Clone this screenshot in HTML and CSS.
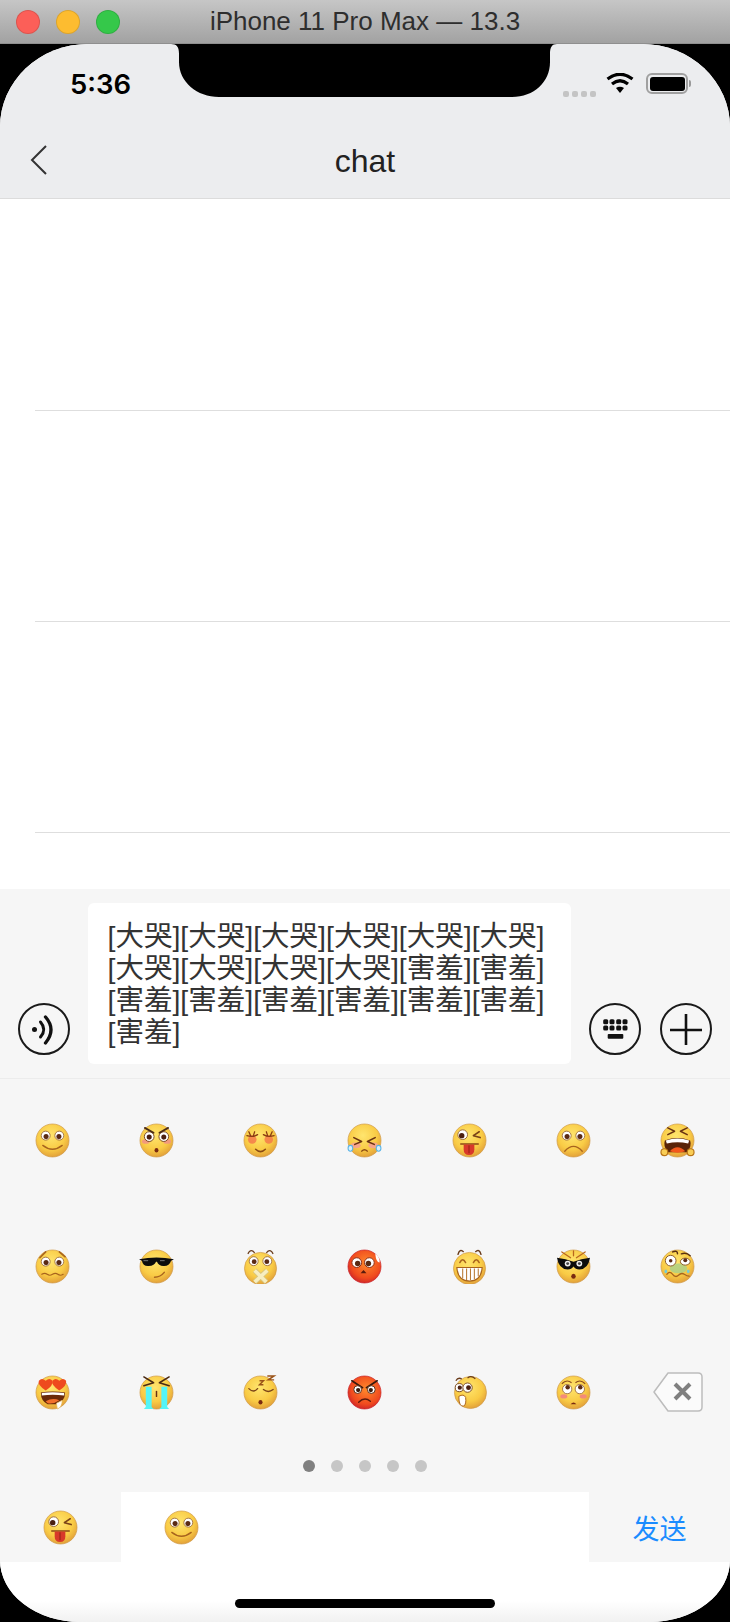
FILE: index.html
```html
<!DOCTYPE html>
<html lang="zh">

<head>
    <meta charset="UTF-8">
    <meta name="viewport" content="width=device-width, initial-scale=1.0">
    <title>chat</title>
    <link rel="stylesheet" href="styles.css">
</head>

<body>
    <!-- emoji sheet, every face below is used from here -->
    <svg class="defs" aria-hidden="true">
        <defs>
            <radialGradient id="skin" cx="45%" cy="35%" r="65%">
                <stop offset="0" stop-color="#ffe56e" />
                <stop offset="0.65" stop-color="#f9cb45" />
                <stop offset="1" stop-color="#e3a23a" />
            </radialGradient>
            <radialGradient id="hot" cx="55%" cy="40%" r="65%">
                <stop offset="0" stop-color="#ff8a2c" />
                <stop offset="0.7" stop-color="#f04a1e" />
                <stop offset="1" stop-color="#c8202a" />
            </radialGradient>
            <symbol id="base" viewBox="0 0 36 36">
                <circle cx="18" cy="18" r="17" fill="url(#skin)" stroke="#cf9a4a" stroke-width="0.7" />
            </symbol>
            <symbol id="eyes" viewBox="0 0 36 36">
                <circle cx="11" cy="13" r="4.6" fill="#fff" stroke="#9a6a3a" stroke-width="0.9" />
                <circle cx="25" cy="13" r="4.6" fill="#fff" stroke="#9a6a3a" stroke-width="0.9" />
                <circle cx="11.4" cy="14" r="2.6" fill="#5a2a14" />
                <circle cx="24.6" cy="14" r="2.6" fill="#5a2a14" />
            </symbol>
            <symbol id="e1" viewBox="0 0 36 36">
                <use href="#base" />
                <use href="#eyes" />
                <path d="M8 23Q18 31 28 23" fill="none" stroke="#a8641e" stroke-width="1.4" stroke-linecap="round" />
            </symbol>
            <symbol id="e2" viewBox="0 0 36 36">
                <use href="#base" />
                <ellipse cx="7" cy="19" rx="4" ry="2.4" fill="#f29a7c" />
                <ellipse cx="29" cy="19" rx="4" ry="2.4" fill="#f29a7c" />
                <circle cx="10.5" cy="14" r="5" fill="#fff" stroke="#7a4a22" />
                <circle cx="25.5" cy="14" r="5" fill="#fff" stroke="#7a4a22" />
                <circle cx="10.5" cy="14.5" r="2.6" fill="#4a1f10" />
                <circle cx="25.5" cy="14.5" r="2.6" fill="#4a1f10" />
                <path d="M6 5L15 10M30 5L21 10" stroke="#4a2a14" stroke-width="1.8" stroke-linecap="round" />
                <ellipse cx="18" cy="28" rx="2" ry="2.4" fill="#7a2a10" />
            </symbol>
            <symbol id="e3" viewBox="0 0 36 36">
                <use href="#base" />
                <circle cx="9.5" cy="17" r="4.4" fill="#f4754a" opacity="0.8" />
                <circle cx="26.5" cy="17" r="4.4" fill="#f4754a" opacity="0.8" />
                <path d="M4 13Q10 15 15 12M6 9L8 13.5M12 9L10.5 13.5M21 12Q26 15 32 13M24 9L25.5 13.5M30 9L28 13.5" fill="none" stroke="#8a3c12" stroke-width="1.3" stroke-linecap="round" />
                <path d="M13 27Q18 32 23 27" fill="none" stroke="#8a4a14" stroke-width="1.6" stroke-linecap="round" />
            </symbol>
            <symbol id="e4" viewBox="0 0 36 36">
                <use href="#base" />
                <ellipse cx="9" cy="23" rx="5" ry="3" fill="#f7a58a" />
                <ellipse cx="27" cy="23" rx="5" ry="3" fill="#f7a58a" />
                <path d="M7 15L15 19L8 22M29 15L21 19L28 22" fill="none" stroke="#6a3312" stroke-width="1.6" stroke-linecap="round" stroke-linejoin="round" />
                <path d="M15 29Q18 26 21 29" fill="none" stroke="#8a4a14" stroke-width="1.3" stroke-linecap="round" />
                <ellipse cx="3.5" cy="26" rx="2.4" ry="3" fill="#d8f1fb" stroke="#5ab4e6" stroke-width="1.1" />
                <ellipse cx="32.5" cy="26" rx="2.4" ry="3" fill="#d8f1fb" stroke="#5ab4e6" stroke-width="1.1" />
            </symbol>
            <symbol id="e5" viewBox="0 0 36 36">
                <use href="#base" />
                <circle cx="11" cy="12" r="5" fill="#fff" stroke="#9a6a3a" />
                <circle cx="10" cy="13" r="2.8" fill="#4a1f10" />
                <path d="M22 13L28 9M22 13L29 15" fill="none" stroke="#7a4318" stroke-width="1.6" stroke-linecap="round" />
                <path d="M9 21.5H27" stroke="#8a4a14" stroke-width="1.5" stroke-linecap="round" />
                <path d="M12 22H23V27Q23 33 17.500 33Q12 33 12 27Z" fill="#d8382a" />
                <path d="M17.500 23V31" stroke="#8f1f14" stroke-width="1" />
            </symbol>
            <symbol id="e6" viewBox="0 0 36 36">
                <use href="#base" />
                <use href="#eyes" />
                <path d="M9 29Q18 19 27 29" fill="none" stroke="#a8641e" stroke-width="1.4" stroke-linecap="round" />
            </symbol>
            <symbol id="e7" viewBox="0 0 36 36">
                <use href="#base" />
                <path d="M8 5L15 8.500L8 12M28 5L21 8.500L28 12" fill="none" stroke="#6a3312" stroke-width="1.5" stroke-linecap="round" stroke-linejoin="round" />
                <path d="M5 18Q18 13 31 18Q33 24 28 30H8Q3 24 5 18Z" fill="#5a2408" />
                <path d="M6 18Q18 14 30 18L29 21Q18 18.500 7 21Z" fill="#fff" />
                <path d="M10 29Q18 21 26 29Q18 32 10 29Z" fill="#f2581c" />
                <circle cx="4.500" cy="30" r="3.500" fill="#f9cd55" stroke="#b87416" stroke-width="1.2" />
                <circle cx="31.500" cy="30" r="3.500" fill="#f9cd55" stroke="#b87416" stroke-width="1.2" />
            </symbol>
            <symbol id="e8" viewBox="0 0 36 36">
                <use href="#base" />
                <path d="M5 9L11 3M25 3L31 8" stroke="#a8641e" stroke-width="1.6" stroke-linecap="round" />
                <use href="#eyes" />
                <path d="M7 26Q10 24 12.500 26T18 26T23.500 26T29 26" fill="none" stroke="#a8641e" stroke-width="1.2" stroke-linecap="round" />
            </symbol>
            <symbol id="e9" viewBox="0 0 36 36">
                <use href="#base" />
                <path d="M0 10.500Q18 7 36 10.500L33 12Q31 18 25 17.500Q20 17 18.500 13H17.500Q16 17 10 17.500Q4 18 3 12Z" fill="#0c0c0c" />
                <path d="M5 12L9 12M22 12L26 12" stroke="#777" stroke-width="1" stroke-linecap="round" />
                <path d="M16 29Q22 29 26 24" fill="none" stroke="#a8641e" stroke-width="1.5" stroke-linecap="round" />
            </symbol>
            <symbol id="e10" viewBox="0 0 36 36">
                <circle cx="18" cy="20" r="16.500" fill="url(#skin)" stroke="#cf9a4a" stroke-width="0.7" />
                <path d="M5 5Q8 -1 12 4M24 4Q28 -1 31 5" fill="none" stroke="#6a3c1c" stroke-width="1.300" />
                <circle cx="11" cy="12.500" r="4.600" fill="#fff" stroke="#9a6a3a" stroke-width="0.9" />
                <circle cx="25" cy="12.500" r="4.600" fill="#fff" stroke="#9a6a3a" stroke-width="0.9" />
                <circle cx="11.500" cy="13" r="2.500" fill="#5a2a14" />
                <circle cx="24.500" cy="13" r="2.500" fill="#5a2a14" />
                <path d="M12 22L24 34M25 22L12 34" stroke="#d8c47e" stroke-width="5.400" />
                <path d="M12 22L24 34M25 22L12 34" stroke="#f7eec0" stroke-width="3.600" />
            </symbol>
            <symbol id="e11" viewBox="0 0 36 36">
                <circle cx="18" cy="18" r="17" fill="url(#hot)" stroke="#c8202a" stroke-width="0.7" />
                <circle cx="10" cy="14" r="5" fill="#fff" stroke="#8a2a14" />
                <circle cx="23" cy="14" r="5" fill="#fff" stroke="#8a2a14" />
                <circle cx="11" cy="15" r="2.800" fill="#5a2a14" />
                <circle cx="22" cy="15" r="2.800" fill="#5a2a14" />
                <path d="M14 25L17 21.500L20 25Z" fill="#5a1a0c" />
                <path d="M29 5Q34 8 33.500 14Q30 14 29 5Z" fill="#fff" />
            </symbol>
            <symbol id="e12" viewBox="0 0 36 36">
                <circle cx="18" cy="20" r="16.500" fill="url(#skin)" stroke="#cf9a4a" stroke-width="0.7" />
                <path d="M6 6Q8 -1 12 3M24 3Q28 -1 30 6" fill="none" stroke="#6a3c1c" stroke-width="1.500" />
                <path d="M8 14Q11 8 14 14M22 14Q25 8 28 14" fill="none" stroke="#a8641e" stroke-width="1.500" stroke-linecap="round" />
                <path d="M5 19H31Q30 33 18 33Q6 33 5 19Z" fill="#fff" stroke="#a8641e" stroke-width="1.200" />
                <path d="M11 20V30M15 20V32M19 20V32M23 20V31M27 20V28" stroke="#b97b36" stroke-width="1.100" />
            </symbol>
            <symbol id="e13" viewBox="0 0 36 36">
                <use href="#base" />
                <path d="M6 3L15 9M30 3L21 9M18 2V7" stroke="#b9661e" stroke-width="1.300" stroke-linecap="round" />
                <path d="M1 9Q10 10 18 13Q26 10 35 9Q33 21 24 21Q20 21 18 18Q16 21 12 21Q3 21 1 9Z" fill="#0c0c0c" />
                <circle cx="12" cy="15" r="3" fill="#eee" />
                <circle cx="24" cy="15" r="3" fill="#eee" />
                <circle cx="12" cy="15" r="1.500" fill="#444" />
                <circle cx="24" cy="15" r="1.500" fill="#444" />
                <ellipse cx="18" cy="28" rx="2.300" ry="2.600" fill="#7a2a10" />
            </symbol>
            <symbol id="e14" viewBox="0 0 36 36">
                <use href="#base" />
                <ellipse cx="19" cy="20" rx="9" ry="5" fill="#a9cf8a" opacity="0.8" />
                <circle cx="11" cy="12" r="5.500" fill="#fff" stroke="#8a5a2a" />
                <circle cx="11" cy="12" r="1.800" fill="#5a2a14" />
                <ellipse cx="26" cy="13" rx="5" ry="3.600" fill="#fff" stroke="#8a5a2a" />
                <circle cx="26" cy="11.500" r="2" fill="#5a2a14" />
                <path d="M13 3Q18 1 18 5M22 5Q27 3 31 7" fill="none" stroke="#5a2f12" stroke-width="1.500" stroke-linecap="round" />
                <path d="M7 26Q10 22 13 26T19 27T25 26T30 28" fill="none" stroke="#a8641e" stroke-width="1.300" stroke-linecap="round" />
                <ellipse cx="6" cy="23" rx="1.400" ry="2" fill="#74cbd8" />
                <ellipse cx="29" cy="23" rx="1.400" ry="2" fill="#74cbd8" />
            </symbol>
            <symbol id="e15" viewBox="0 0 36 36">
                <use href="#base" />
                <path d="M11 16Q2 10 4 6Q7 2 11 6Q15 2 18 6Q19 11 11 16Z" fill="#ee4a1e" />
                <path d="M25 16Q16 10 18 6Q21 2 25 6Q29 2 32 6Q33 11 25 16Z" fill="#ee4a1e" />
                <path d="M6 18Q18 16 31 18Q31 27 22 30H13Q6 27 6 18Z" fill="#6a2a0a" />
                <path d="M7 18.500Q18 17 30 18.500V21Q18 19.500 7 21Z" fill="#fff" />
                <path d="M11 27Q18 23 25 26Q20 30 13 29Z" fill="#f2702c" />
                <path d="M22 29L28 26Q28 33 23 35Z" fill="#fff" stroke="#e8b75a" stroke-width="0.700" />
            </symbol>
            <symbol id="e16" viewBox="0 0 36 36">
                <use href="#base" />
                <path d="M5 2L15 8L5 11M31 2L21 8L31 11" fill="none" stroke="#4a2a14" stroke-width="1.600" stroke-linejoin="round" stroke-linecap="round" />
                <path d="M7 12H13V33L15 35H5L7 33Z" fill="#55f5f7" />
                <path d="M23 12H29V33L31 35H21L23 33Z" fill="#55f5f7" />
                <path d="M18 17V22" stroke="#6a3312" stroke-width="1.500" stroke-linecap="round" />
            </symbol>
            <symbol id="e17" viewBox="0 0 36 36">
                <use href="#base" />
                <path d="M6 14Q11 19 15 14M21 15Q26 19 31 15" fill="none" stroke="#7a4318" stroke-width="1.400" stroke-linecap="round" />
                <path d="M25 1H32L26 5H32M17 6H21L17 10H21" fill="none" stroke="#9a5318" stroke-width="1.500" />
                <ellipse cx="18" cy="28" rx="2.100" ry="2.400" fill="#7a2a10" />
            </symbol>
            <symbol id="e18" viewBox="0 0 36 36">
                <circle cx="18" cy="18" r="17" fill="url(#hot)" stroke="#c8202a" stroke-width="0.7" />
                <path d="M5 6L16 13M31 6L20 13" stroke="#3a1a0c" stroke-width="1.800" stroke-linecap="round" />
                <circle cx="11" cy="15" r="4" fill="#fff" stroke="#5a2a14" />
                <circle cx="25" cy="15" r="4" fill="#fff" stroke="#5a2a14" />
                <circle cx="11.500" cy="15.500" r="2.200" fill="#3a1a0c" />
                <circle cx="24.500" cy="15.500" r="2.200" fill="#3a1a0c" />
                <path d="M12 28Q18 22 24 27" fill="none" stroke="#5a1a0c" stroke-width="1.500" stroke-linecap="round" />
            </symbol>
            <symbol id="e19" viewBox="0 0 36 36">
                <circle cx="19" cy="18" r="16.500" fill="url(#skin)" stroke="#cf9a4a" stroke-width="0.7" />
                <path d="M4 6Q6 2 10 4M16 3Q20 0 24 4" fill="none" stroke="#6a3c1c" stroke-width="1.300" />
                <circle cx="7.500" cy="13" r="4.200" fill="#fff" stroke="#7a4a22" />
                <circle cx="16" cy="13" r="4.800" fill="#fff" stroke="#7a4a22" />
                <circle cx="8" cy="13" r="2.200" fill="#4a1f10" />
                <circle cx="17" cy="13" r="2.500" fill="#4a1f10" />
                <path d="M7 22Q12 19 14 23Q15 30 12 32Q7 33 7 22Z" fill="#fff" stroke="#a8641e" />
            </symbol>
            <symbol id="e20" viewBox="0 0 36 36">
                <use href="#base" />
                <ellipse cx="8" cy="22" rx="3.600" ry="2.100" fill="#f48b78" />
                <ellipse cx="28" cy="22" rx="3.600" ry="2.100" fill="#f48b78" />
                <path d="M6 9Q11 4 16 8M20 8Q25 4 30 9" fill="none" stroke="#8a4a1c" stroke-width="1.100" />
                <circle cx="11.500" cy="14.500" r="4.800" fill="#fff" stroke="#9a6a3a" stroke-width="0.900" />
                <circle cx="24.500" cy="14.500" r="4.800" fill="#fff" stroke="#9a6a3a" stroke-width="0.900" />
                <circle cx="12" cy="12.500" r="2.300" fill="#5a2a14" />
                <circle cx="25" cy="12.500" r="2.300" fill="#5a2a14" />
                <path d="M15 30Q18 26.500 21 30Z" fill="#7a2a10" />
            </symbol>
        </defs>
    </svg>

    <div class="titlebar">
        <div class="lights">
            <span class="light red"></span>
            <span class="light yellow"></span>
            <span class="light green"></span>
        </div>
        <span class="device-name">iPhone 11 Pro Max — 13.3</span>
    </div>

    <div class="screen">
        <svg class="notch" width="386" height="53" viewBox="0 0 386 53">
            <path d="M0 0C6 0 8 3 8 10V18C8 38 26 53 48 53H341C363 53 379 38 379 18V10C379 3 381 0 386 0Z" fill="#000" />
        </svg>

        <div class="header">
            <div class="statusbar">
                <span class="time">5:36</span>
                <div class="status-icons">
                    <div class="signal"><i></i><i></i><i></i><i></i></div>
                    <svg class="wifi" width="28" height="20" viewBox="0 0 28 20">
                        <path d="M1.500 6Q14 -3.500 26.500 6" fill="none" stroke="#000" stroke-width="3.200" />
                        <path d="M6 11Q14 4.500 22 11" fill="none" stroke="#000" stroke-width="3.200" />
                        <path d="M10 15Q14 12.500 18 15L14 20Z" fill="#000" />
                    </svg>
                    <div class="battery"><i></i></div>
                    <span class="battery-nub"></span>
                </div>
            </div>
            <div class="navbar">
                <svg class="back" width="18" height="30" viewBox="0 0 18 30">
                    <path d="M16 1L2 15L16 29" fill="none" stroke="#333" stroke-width="2" />
                </svg>
                <span class="nav-title">chat</span>
            </div>
        </div>

        <div class="list">
            <div class="row"></div>
            <div class="row"></div>
            <div class="row"></div>
        </div>

        <div class="inputbar">
            <button class="round">
                <svg width="52" height="52" viewBox="0 0 52 52">
                    <circle cx="16.500" cy="26.500" r="2.500" fill="#111" />
                    <path d="M22.500 19Q29 26.500 22.500 34" fill="none" stroke="#111" stroke-width="3" stroke-linecap="round" />
                    <path d="M27.500 14Q38.500 26.500 27.500 40" fill="none" stroke="#111" stroke-width="3.300" stroke-linecap="round" />
                </svg>
            </button>
            <div class="textbox">[大哭][大哭][大哭][大哭][大哭][大哭][大哭][大哭][大哭][大哭][害羞][害羞][害羞][害羞][害羞][害羞][害羞][害羞][害羞]</div>
            <button class="round">
                <svg width="52" height="52" viewBox="0 0 52 52" fill="#111">
                    <rect x="14.200" y="16.200" width="5" height="5" rx="1.500" /><rect x="20.500" y="16.200" width="5" height="5" rx="1.500" /><rect x="27.200" y="16.200" width="5" height="5" rx="1.500" /><rect x="33.500" y="16.200" width="5" height="5" rx="1.500" />
                    <rect x="14.200" y="22.500" width="5" height="5" rx="1.500" /><rect x="20.500" y="22.500" width="5" height="5" rx="1.500" /><rect x="27.200" y="22.500" width="5" height="5" rx="1.500" /><rect x="33.500" y="22.500" width="5" height="5" rx="1.500" />
                    <rect x="18.700" y="31" width="15.600" height="4.700" rx="1" />
                </svg>
            </button>
            <button class="round plus">
                <svg width="52" height="52" viewBox="0 0 52 52">
                    <path d="M26 11V42M10 27H42" stroke="#111" stroke-width="2.600" />
                </svg>
            </button>
        </div>

        <div class="emoji-grid">
            <div class="cell"><svg class="emoji"><use href="#e1" /></svg></div>
            <div class="cell"><svg class="emoji"><use href="#e2" /></svg></div>
            <div class="cell"><svg class="emoji"><use href="#e3" /></svg></div>
            <div class="cell"><svg class="emoji"><use href="#e4" /></svg></div>
            <div class="cell"><svg class="emoji"><use href="#e5" /></svg></div>
            <div class="cell"><svg class="emoji"><use href="#e6" /></svg></div>
            <div class="cell"><svg class="emoji"><use href="#e7" /></svg></div>
            <div class="cell"><svg class="emoji"><use href="#e8" /></svg></div>
            <div class="cell"><svg class="emoji"><use href="#e9" /></svg></div>
            <div class="cell"><svg class="emoji"><use href="#e10" /></svg></div>
            <div class="cell"><svg class="emoji"><use href="#e11" /></svg></div>
            <div class="cell"><svg class="emoji"><use href="#e12" /></svg></div>
            <div class="cell"><svg class="emoji"><use href="#e13" /></svg></div>
            <div class="cell"><svg class="emoji"><use href="#e14" /></svg></div>
            <div class="cell"><svg class="emoji"><use href="#e15" /></svg></div>
            <div class="cell"><svg class="emoji"><use href="#e16" /></svg></div>
            <div class="cell"><svg class="emoji"><use href="#e17" /></svg></div>
            <div class="cell"><svg class="emoji"><use href="#e18" /></svg></div>
            <div class="cell"><svg class="emoji"><use href="#e19" /></svg></div>
            <div class="cell"><svg class="emoji"><use href="#e20" /></svg></div>
            <div class="cell">
                <svg class="delete" width="50" height="40" viewBox="0 0 50 40">
                    <path d="M15 1H45Q49 1 49 5V35Q49 39 45 39H15L1 20Z" fill="#fbfbfb" stroke="#bdbdbd" stroke-width="1.500" stroke-linejoin="round" />
                    <path d="M22 12L37 27M37 12L22 27" stroke="#808080" stroke-width="4" />
                </svg>
            </div>
        </div>

        <div class="dots">
            <span class="dot active"></span>
            <span class="dot"></span>
            <span class="dot"></span>
            <span class="dot"></span>
            <span class="dot"></span>
        </div>

        <div class="sendbar">
            <div class="tab"><svg class="emoji"><use href="#e5" /></svg></div>
            <div class="preview"><svg class="emoji"><use href="#e1" /></svg></div>
            <div class="send">发送</div>
        </div>

        <div class="homearea">
            <span class="homebar"></span>
        </div>
    </div>
</body>

</html>
```

FILE: styles.css
```css
html,
body {
    margin: 0;
    padding: 0;
    background: #000;
}

body {
    width: 730px;
    height: 1622px;
    overflow: hidden;
    font-family: "Liberation Sans", "Noto Sans CJK SC", sans-serif;
}

.defs {
    display: block;
    width: 0;
    height: 0;
}

.titlebar {
    height: 44px;
    box-sizing: border-box;
    display: flex;
    align-items: center;
    justify-content: center;
    position: relative;
    background: linear-gradient(#c6c6c6, #a2a2a2);
    border-bottom: 1px solid #8f8f8f;
}

.lights {
    position: absolute;
    left: 16px;
    top: 10px;
    display: flex;
    gap: 16px;
}

.light {
    width: 24px;
    height: 24px;
    box-sizing: border-box;
    border-radius: 50%;
    border: 1px solid rgba(0, 0, 0, 0.12);
}

.red {
    background: #fc5f58;
}

.yellow {
    background: #fdbc30;
}

.green {
    background: #35c84a;
}

.device-name {
    font-size: 26px;
    color: #2e2e2e;
}

.screen {
    position: relative;
    height: 1578px;
    display: flex;
    flex-direction: column;
    overflow: hidden;
    background: #fff;
    border-radius: 88px 88px 80px 80px / 83px 83px 62px 62px;
}

.notch {
    position: absolute;
    left: 171px;
    top: 0;
}

.header {
    flex: none;
    background: #ecedef;
    border-bottom: 1px solid #dcdcdc;
}

.statusbar {
    height: 80px;
    box-sizing: border-box;
    padding: 26px 39px 0 70px;
    display: flex;
    justify-content: space-between;
    align-items: flex-start;
}

.time {
    font-family: Inter, sans-serif;
    font-size: 27.500px;
    line-height: 28px;
    font-weight: 600;
    color: #000;
}

.status-icons {
    display: flex;
    margin-top: 3px;
}

.signal {
    display: flex;
    gap: 2.500px;
    margin: 18px 10px 0 0;
}

.signal i {
    width: 6.500px;
    height: 6px;
    border-radius: 2px;
    background: #c4c4c4;
}

.wifi {
    margin-right: 12px;
}

.battery {
    width: 42px;
    height: 21px;
    box-sizing: border-box;
    padding: 1.500px;
    border: 2px solid #a0a0a0;
    border-radius: 6px;
    display: flex;
}

.battery i {
    flex: 1;
    background: #000;
    border-radius: 3px;
}

.battery-nub {
    width: 2px;
    height: 7px;
    margin: 7px 0 0 1px;
    background: #9a9a9a;
    border-radius: 0 2px 2px 0;
}

.navbar {
    height: 74px;
    position: relative;
    display: flex;
    align-items: center;
    justify-content: center;
}

.back {
    position: absolute;
    left: 30px;
    top: 21px;
}

.nav-title {
    font-size: 32px;
    color: #222;
}

.list {
    flex: none;
    height: 690px;
    box-sizing: border-box;
    padding-top: 1px;
    background: #fff;
}

.row {
    height: 210px;
    margin-left: 35px;
    border-bottom: 1px solid #dedede;
}

.inputbar {
    flex: none;
    padding: 14px 18px;
    display: flex;
    align-items: flex-end;
    gap: 18px;
    background: #f6f6f6;
    border-bottom: 1px solid #ececec;
}

.round {
    width: 52px;
    height: 52px;
    flex: none;
    margin-bottom: 9px;
    padding: 0;
    box-sizing: border-box;
    border: 2px solid #1a1a1a;
    border-radius: 50%;
    background: transparent;
    overflow: hidden;
}

.round svg {
    display: block;
    margin: -2px;
}

.plus {
    margin-left: 1px;
}

.textbox {
    width: 483px;
    box-sizing: border-box;
    padding: 17px 19.500px 16px;
    border-radius: 6px;
    background: #fff;
    color: #333;
    font-size: 28.500px;
    line-height: 32px;
}

.emoji-grid {
    flex: none;
    display: grid;
    grid-template-columns: repeat(7, 1fr);
    grid-auto-rows: 126px;
    background: #f6f6f6;
}

.cell {
    padding-top: 44px;
    display: flex;
    justify-content: center;
    align-items: flex-start;
}

.emoji {
    width: 35px;
    height: 35px;
    flex: none;
}

.delete {
    margin-top: -3px;
}

.dots {
    flex: none;
    height: 35px;
    padding-top: 3px;
    box-sizing: border-box;
    display: flex;
    justify-content: center;
    gap: 16px;
    background: #f6f6f6;
}

.dot {
    width: 12px;
    height: 12px;
    border-radius: 50%;
    background: #c6c6c6;
}

.dot.active {
    background: #808080;
}

.sendbar {
    flex: none;
    height: 70px;
    display: flex;
    background: #f6f6f6;
}

.tab {
    width: 121px;
    display: flex;
    align-items: center;
    justify-content: center;
}

.preview {
    width: 468px;
    box-sizing: border-box;
    padding-left: 43px;
    display: flex;
    align-items: center;
    background: #fff;
}

.send {
    flex: 1;
    display: flex;
    align-items: center;
    justify-content: center;
    font-size: 27px;
    color: #1a8cff;
}

.homearea {
    flex: 1;
    display: flex;
    justify-content: center;
    align-items: flex-start;
    padding-top: 37px;
    background: linear-gradient(#fff 65%, #f1f1f1);
}

.homebar {
    width: 260px;
    height: 9px;
    border-radius: 5px;
    background: #000;
}
```
